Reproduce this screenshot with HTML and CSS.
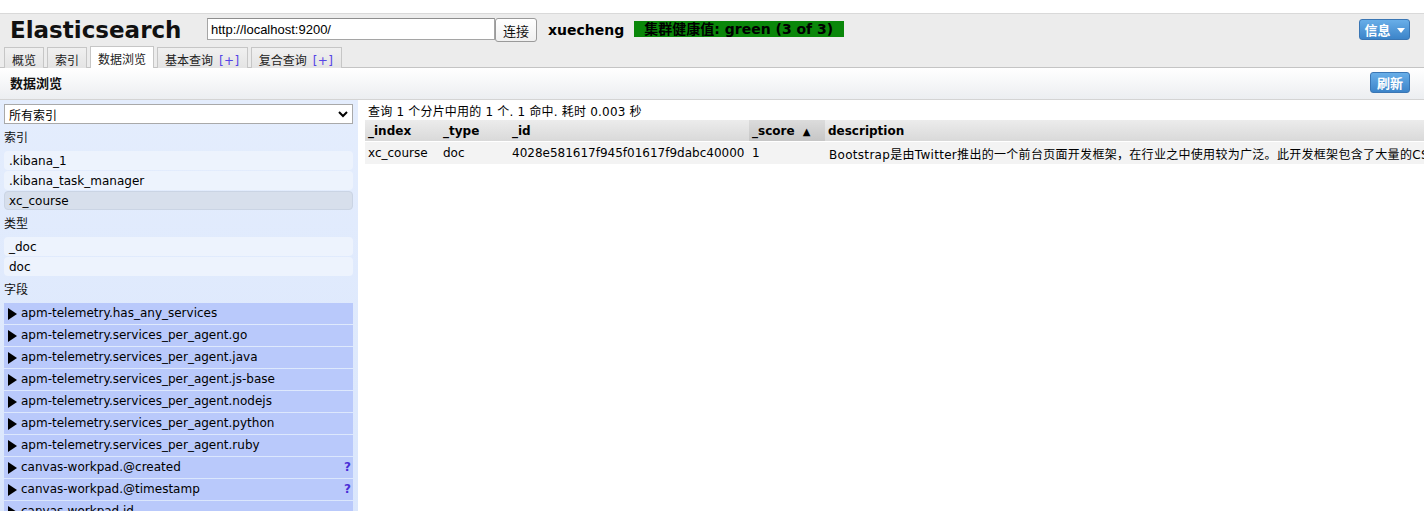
FILE: index.html
```html
<!DOCTYPE html>
<html lang="zh">
<head>
<meta charset="utf-8">
<title>Elasticsearch</title>
<link rel="stylesheet" href="styles.css">
</head>
<body>
<div class="topstrip"></div>
<div class="header">
  <div class="bar">
    <h1 class="title">Elasticsearch</h1>
    <input class="url" type="text" value="http://localhost:9200/">
    <button class="connect">连接</button>
    <span class="cluster">xuecheng</span>
    <span class="health">集群健康值: green (3 of 3)</span>
    <span class="spacer"></span>
    <button class="bluebtn info">信息 <svg class="caret" width="8" height="5" viewBox="0 0 8 5"><path d="M0 0h8L4 5z" fill="#fff"/></svg></button>
  </div>
  <div class="tabs">
    <div class="tab">概览</div>
    <div class="tab">索引</div>
    <div class="tab active">数据浏览</div>
    <div class="tab">基本查询 <span class="plus">[+]</span></div>
    <div class="tab">复合查询 <span class="plus">[+]</span></div>
  </div>
</div>
<div class="subbar">
  <span class="subtitle">数据浏览</span>
  <button class="bluebtn refresh">刷新</button>
</div>
<div class="main">
  <div class="sidebar">
    <div class="select"><span>所有索引</span><svg width="10" height="7" viewBox="0 0 10 7"><path d="M1 1l4 4 4-4" fill="none" stroke="#000" stroke-width="2"/></svg></div>
    <div class="label">索引</div>
    <div class="item">.kibana_1</div>
    <div class="item">.kibana_task_manager</div>
    <div class="item selected">xc_course</div>
    <div class="label">类型</div>
    <div class="item">_doc</div>
    <div class="item">doc</div>
    <div class="label">字段</div>
    <div class="field"><span class="tri"></span>apm-telemetry.has_any_services</div>
    <div class="field"><span class="tri"></span>apm-telemetry.services_per_agent.go</div>
    <div class="field"><span class="tri"></span>apm-telemetry.services_per_agent.java</div>
    <div class="field"><span class="tri"></span>apm-telemetry.services_per_agent.js-base</div>
    <div class="field"><span class="tri"></span>apm-telemetry.services_per_agent.nodejs</div>
    <div class="field"><span class="tri"></span>apm-telemetry.services_per_agent.python</div>
    <div class="field"><span class="tri"></span>apm-telemetry.services_per_agent.ruby</div>
    <div class="field"><span class="tri"></span>canvas-workpad.@created<span class="q">?</span></div>
    <div class="field"><span class="tri"></span>canvas-workpad.@timestamp<span class="q">?</span></div>
    <div class="field"><span class="tri"></span>canvas-workpad.id</div>
  </div>
  <div class="content">
    <div class="summary">查询 1 个分片中用的 1 个. 1 命中. 耗时 0.003 秒</div>
    <table class="results">
      <colgroup>
        <col class="c-index"><col class="c-type"><col class="c-id"><col class="c-score"><col class="c-desc">
      </colgroup>
      <thead>
        <tr><th>_index</th><th>_type</th><th>_id</th><th class="sorted">_score <span class="arrow">▲</span></th><th>description</th></tr>
      </thead>
      <tbody>
        <tr><td>xc_course</td><td>doc</td><td>4028e581617f945f01617f9dabc40000</td><td>1</td><td class="desc">Bootstrap是由Twitter推出的一个前台页面开发框架，在行业之中使用较为广泛。此开发框架包含了大量的CSS、JS程序代码，可以帮助开发者</td></tr>
      </tbody>
    </table>
  </div>
</div>
</body>
</html>
```
FILE: styles.css
```css
html, body {
  margin: 0;
  padding: 0;
  height: 511px;
  overflow: hidden;
}
body {
  font-family: "DejaVu Sans", "Noto Sans CJK SC", sans-serif;
  font-size: 12px;
  color: #000;
  background: #fff;
}
.topstrip {
  height: 13px;
  background: #fff;
  border-bottom: 1px solid #d9d9d9;
}
.header {
  background: #ececec;
}
.bar {
  display: flex;
  align-items: center;
  height: 32px;
  padding-left: 10px;
}
.title {
  margin: 0;
  font-size: 23px;
  font-weight: bold;
  color: #111;
  line-height: 30px;
  width: 197px;
}
.url {
  box-sizing: border-box;
  width: 288px;
  height: 22px;
  margin: 0 0 2px 0;
  padding: 0 3px;
  border: 1px solid #a5a5a5;
  border-top-color: #8d8d8d;
  font-family: "Liberation Sans", Arial, sans-serif;
  font-size: 13px;
  background: #fff;
}
.connect {
  box-sizing: border-box;
  width: 42px;
  height: 24px;
  margin-left: 0;
  padding: 0;
  border: 1px solid #9a9a9a;
  border-radius: 3px;
  background: linear-gradient(#ffffff, #f0f0f0);
  font-family: "Noto Sans CJK SC", sans-serif;
  font-size: 13px;
  color: #111;
}
.cluster {
  margin-left: 11px;
  font-weight: bold;
  font-size: 14px;
}
.health {
  margin-left: 10px;
  box-sizing: border-box;
  width: 210px;
  height: 16px;
  line-height: 16px;
  padding-left: 10px;
  background: #0a870a;
  font-weight: bold;
  font-size: 14px;
  color: #000;
  margin-bottom: 2px;
}
.spacer { flex: 1; }
.bluebtn {
  box-sizing: border-box;
  border: 1px solid #3a76b4;
  border-radius: 3px;
  background: linear-gradient(#68aee8, #3c84c9);
  color: #fff;
  font-family: "Noto Sans CJK SC", sans-serif;
  font-weight: bold;
  font-size: 13px;
  padding: 0;
  display: inline-flex;
  align-items: center;
  justify-content: center;
}
.info {
  width: 51px;
  height: 21px;
  margin-right: 14px;
  margin-bottom: 1px;
  gap: 6px;
}
.caret { margin-top: 1px; }
.tabs {
  display: flex;
  align-items: flex-end;
  gap: 3px;
  padding-left: 4px;
  height: 21px;
  position: relative;
  z-index: 1;
}
.tab {
  height: 17px;
  padding: 3px 7px 0 7px;
  line-height: 20px;
  border: 1px solid #c6c6c6;
  border-bottom: none;
  background: linear-gradient(#f0f0f0, #e4e4e4);
  font-family: "DejaVu Sans", "Noto Sans CJK SC", sans-serif;
  font-size: 12px;
  color: #222;
  margin-bottom: -1px;
  overflow: hidden;
}
.tab.active {
  background: #fff;
  height: 18px;
}
.plus {
  color: #5544e6;
  font-size: 12px;
  margin-left: 2px;
  letter-spacing: 0.5px;
}
.subbar {
  display: flex;
  align-items: center;
  justify-content: space-between;
  height: 31px;
  border-top: 1px solid #c4c4c4;
  border-bottom: 1px solid #d4d4d4;
  background: linear-gradient(#ffffff, #eceef1);
  padding-left: 10px;
}
.subtitle {
  font-family: "Noto Sans CJK SC", sans-serif;
  font-weight: bold;
  font-size: 13px;
  color: #111;
  position: relative;
  top: -1px;
}
.refresh {
  width: 40px;
  height: 21px;
  margin-right: 14px;
  margin-bottom: 2px;
}
.main {
  display: flex;
  height: 420px;
}
.sidebar {
  width: 358px;
  flex: none;
  box-sizing: border-box;
  padding: 4px 5px 0 4px;
  background: linear-gradient(#e4edfd, #dae6fc);
}
.select {
  box-sizing: border-box;
  height: 20px;
  display: flex;
  align-items: center;
  justify-content: space-between;
  padding: 0 4px 0 4px;
  background: #fff;
  border: 1px solid #a9a9a9;
  font-family: "Noto Sans CJK SC", sans-serif;
  font-size: 12px;
}
.label {
  height: 20px;
  line-height: 20px;
  padding-top: 3px;
  margin-bottom: 4px;
  font-family: "Noto Sans CJK SC", sans-serif;
  font-size: 12px;
  color: #111;
}
.item {
  height: 19px;
  line-height: 20px;
  margin-top: 1px;
  padding-left: 5px;
  border-radius: 4px;
  background: #edf3fd;
}
.item.selected {
  background: #d7dfec;
  border: 1px solid #cad4e4;
  height: 17px;
  line-height: 18px;
  padding-left: 4px;
}
.field {
  height: 21px;
  line-height: 21px;
  margin-top: 1px;
  background: #b9c9fb;
  display: flex;
  align-items: center;
  padding-left: 4px;
  padding-right: 2px;
}
.tri {
  width: 0;
  height: 0;
  border-top: 6px solid transparent;
  border-bottom: 6px solid transparent;
  border-left: 9px solid #000;
  margin-right: 4px;
  margin-left: 0;
}
.q {
  margin-left: auto;
  color: #4b2fd6;
  font-weight: bold;
  font-size: 12px;
}
.content {
  flex: 1;
  overflow: hidden;
  padding: 4px 0 0 7px;
  background: #fff;
}
.summary {
  font-family: "DejaVu Sans", "Noto Sans CJK SC", sans-serif;
  font-size: 12px;
  line-height: 16px;
  padding-left: 3px;
  letter-spacing: 0.2px;
}
.results {
  table-layout: fixed;
  border-collapse: collapse;
  width: 1400px;
  white-space: nowrap;
}
.c-index { width: 75px; }
.c-type { width: 69px; }
.c-id { width: 240px; }
.c-score { width: 76px; }
.c-desc { width: 940px; }
.results th {
  height: 20px;
  padding: 1px 0 0 3px;
  text-align: left;
  font-weight: bold;
  font-size: 12px;
  background: linear-gradient(#ececec, #d9d9d9);
  border-bottom: 1px solid #fff;
}
.results th.sorted {
  background: linear-gradient(#dcdcdc, #c6c6c6);
}
.arrow { font-size: 10px; margin-left: 4px; }
.results td {
  height: 22px;
  padding: 0 0 0 3px;
  overflow: hidden;
  background: #f3f3f3;
  font-size: 12px;
}
.results td.desc {
  padding-left: 4px;
  letter-spacing: 0.3px;
}
```
